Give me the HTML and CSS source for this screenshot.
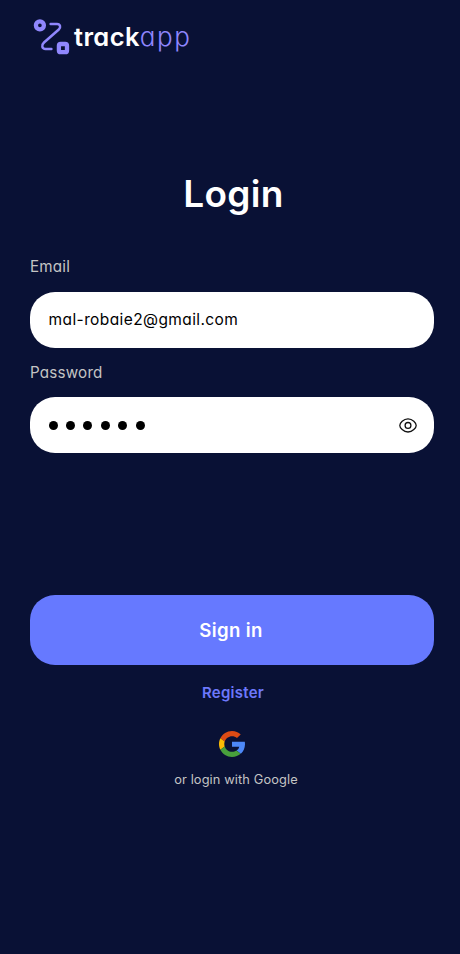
FILE: index.html
```
<!DOCTYPE html>
<html lang="en">
<head>
<meta charset="utf-8">
<title>trackapp</title>
<link rel="stylesheet" href="styles.css">
</head>
<body>
<main class="screen">
  <header class="brand">
    <svg class="brand-mark" width="37" height="37" viewBox="0 0 37 37" fill="none">
      <circle cx="6.9" cy="7.3" r="4" stroke="#9087fd" stroke-width="4.3"/>
      <path d="M17.6 6H24C27.5 6 28 9.5 25.8 11.5L11 24.5C8 27.3 9 31 12.6 31H18.4" stroke="#9087fd" stroke-width="2.5" stroke-linecap="round"/>
      <rect x="25.9" y="26" width="8.1" height="8.2" rx="1.8" stroke="#9087fd" stroke-width="4.3"/>
    </svg>
    <div class="wordmark"><span class="word-bold">track</span><span class="word-light">app</span></div>
  </header>
  <h1 class="title">Login</h1>
  <form class="form">
    <div class="label">Email</div>
    <div class="field"><span class="value">mal-robaie2@gmail.com</span></div>
    <div class="label label-pass">Password</div>
    <div class="field">
      <div class="dots"><i></i><i></i><i></i><i></i><i></i><i></i></div>
      <svg class="eye" width="20" height="18" viewBox="0 0 20 18" fill="none" stroke="#111" stroke-width="1.3">
        <path d="M1.8 9.4C1.8 7 5.4 2.8 10 2.8S18.2 7 18.2 9.4S14.6 16 10 16S1.8 11.8 1.8 9.4Z"/>
        <circle cx="10" cy="9.4" r="2.9"/>
      </svg>
    </div>
    <button class="signin" type="button">Sign in</button>
  </form>
  <a class="register">Register</a>
  <svg class="google" width="26" height="26" viewBox="0 0 48 48">
    <path fill="#dd4b14" d="M24 9.5c3.54 0 6.71 1.22 9.21 3.6l6.85-6.85C35.9 2.38 30.47 0 24 0 14.62 0 6.51 5.38 2.56 13.22l7.98 6.19C12.43 13.72 17.74 9.5 24 9.5z"/>
    <path fill="#4d88f8" d="M48 24.55c0-1.57-.15-3.09-.38-4.55H24v9.02h13.3c-.58 2.96-2.26 5.48-4.78 7.18l7.73 6C44.76 38.02 48 31.84 48 24.55z"/>
    <path fill="#fbbc05" d="M10.53 28.59c-.48-1.45-.76-2.99-.76-4.59s.27-3.14.76-4.59l-7.98-6.19C.92 16.46 0 20.12 0 24s.92 7.54 2.56 10.78z"/>
    <path fill="#48a03c" d="M24 48c6.48 0 11.93-2.13 15.89-5.81l-7.73-6c-2.15 1.45-4.92 2.3-8.16 2.3-6.26 0-11.57-4.22-13.47-9.91l-7.98 6.19C6.51 42.62 14.62 48 24 48z"/>
  </svg>
  <p class="note">or login with Google</p>
</main>
</body>
</html>
```
FILE: styles.css
```
* { box-sizing: border-box; }
body {
  margin: 0;
  background: #091135;
  font-family: Inter, "Open Sans", sans-serif;
  font-feature-settings: "cv11" 1;
  color: #fff;
}
.screen {
  width: 460px;
  height: 954px;
  padding: 18px 26px 0 30px;
  display: flex;
  flex-direction: column;
  white-space: nowrap;
}
.brand { display: flex; height: 37px; padding-left: 3px; gap: 4px; }
.wordmark { font-size: 25.5px; line-height: 37px; }
.word-bold { font-weight: 600; letter-spacing: 0.4px; }
.word-light { font-size: 26px; font-weight: 300; color: #8f86fd; letter-spacing: 1.5px; }
.title {
  margin: 115px 0 0;
  padding-left: 3px;
  text-align: center;
  font-size: 37px;
  font-weight: 600;
  letter-spacing: 0.3px;
  line-height: 48px;
}
.form { display: flex; flex-direction: column; margin-top: 38.5px; }
.label {
  height: 20px;
  line-height: 20px;
  font-size: 15.2px;
  font-weight: 370;
  letter-spacing: 0.2px;
  color: #c4c4c4;
}
.field {
  margin-top: 15px;
  height: 56px;
  border-radius: 25px;
  background: #fff;
  color: #000;
  display: flex;
  align-items: center;
  justify-content: space-between;
  padding: 0 16px 0 18.6px;
}
.value { font-size: 15.5px; letter-spacing: 0.4px; }
.label-pass { margin-top: 15.1px; }
.field + .label-pass + .field { margin-top: 14.6px; }
.dots { display: flex; gap: 8.4px; }
.dots i { width: 9px; height: 9px; border-radius: 50%; background: #000; }
.signin {
  margin: 142px 0 0;
  border: 0;
  padding: 1px 2px 0 0;
  height: 69.5px;
  border-radius: 25px;
  background: #6679ff;
  color: #fff;
  font: 600 18.6px/68.5px Inter, sans-serif;
  letter-spacing: 0.35px;
}
.register {
  margin-top: 18.1px;
  padding-left: 2px;
  text-align: center;
  font-size: 15px;
  font-weight: 600;
  letter-spacing: 0.27px;
  line-height: 20px;
  color: #6d78fb;
}
.google { align-self: center; margin-top: 28.2px; }
.note {
  margin: 12.7px 0 0;
  padding-left: 8px;
  text-align: center;
  font-size: 12.8px;
  font-weight: 370;
  letter-spacing: 0.12px;
  line-height: 20px;
  color: #c4c4c4;
}
```
